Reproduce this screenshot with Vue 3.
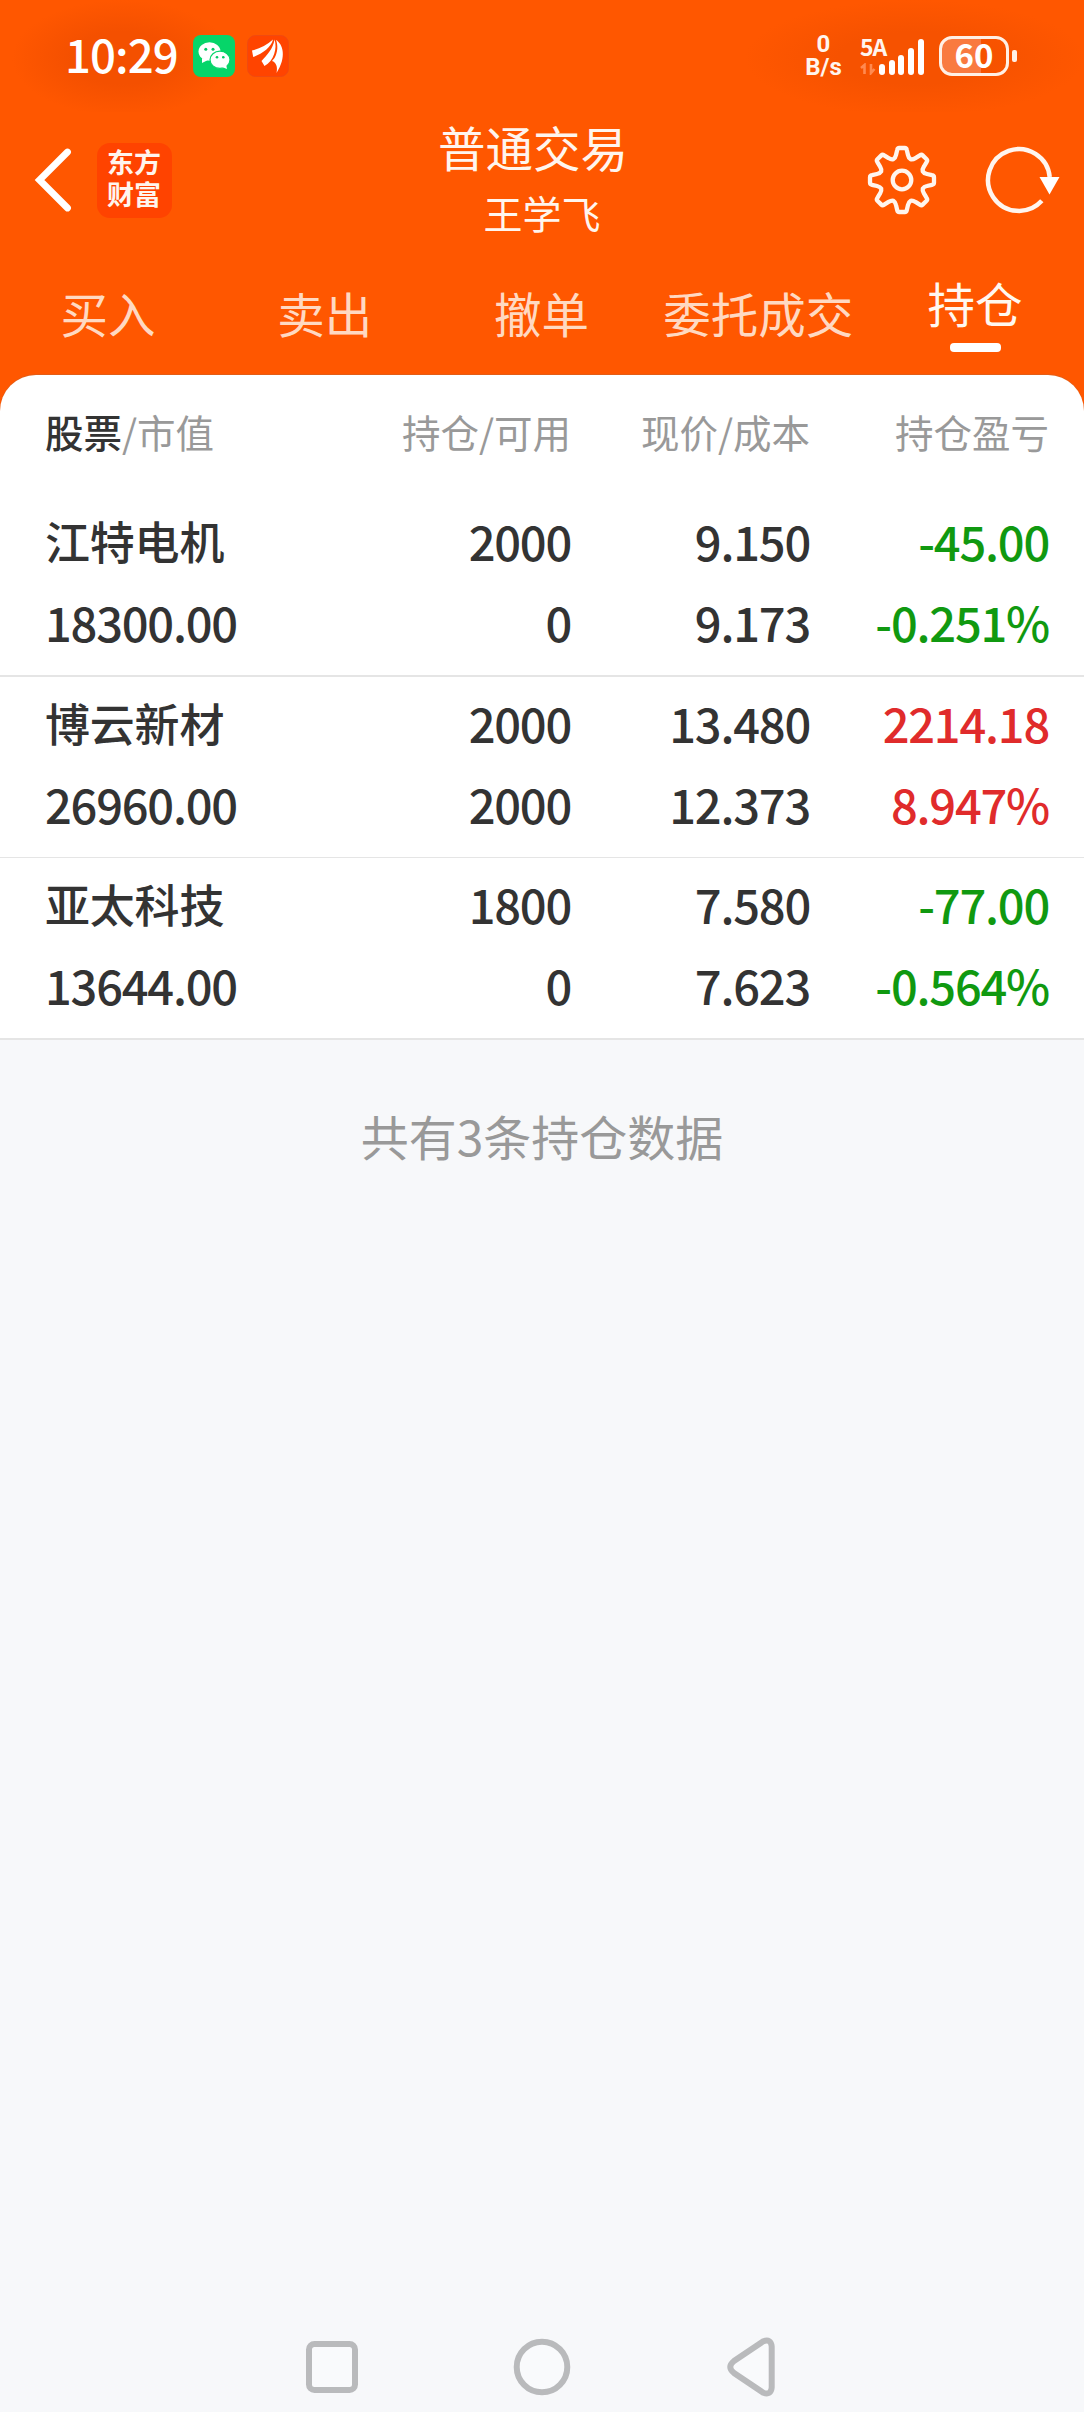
<script setup>
const tabs = ['买入', '卖出', '撤单', '委托成交', '持仓']
const active = '持仓'

const holdings = [
  { name: '江特电机', value: '18300.00', amount: '2000', usable: '0', price: '9.150', cost: '9.173', profit: '-45.00', rate: '-0.251%' },
  { name: '博云新材', value: '26960.00', amount: '2000', usable: '2000', price: '13.480', cost: '12.373', profit: '2214.18', rate: '8.947%' },
  { name: '亚太科技', value: '13644.00', amount: '1800', usable: '0', price: '7.580', cost: '7.623', profit: '-77.00', rate: '-0.564%' },
]

const trend = (v) => (v.startsWith('-') ? 'down' : 'up')

const signal = [11, 15, 20, 27, 36]

// Eight-tooth gear outline centred on the origin
function gear() {
  const at = (x, y, k) => {
    const a = (k * Math.PI) / 4
    return `${(x * Math.cos(a) - y * Math.sin(a)).toFixed(2)} ${(x * Math.sin(a) + y * Math.cos(a)).toFixed(2)}`
  }
  let d = ''
  for (let k = 0; k < 8; k++) {
    d += `${k ? 'L' : 'M'}${at(-6, -25, k)}L${at(-4.8, -30, k)}Q${at(-4.4, -32, k)} ${at(-2.8, -32, k)}`
    d += `L${at(2.8, -32, k)}Q${at(4.4, -32, k)} ${at(4.8, -30, k)}L${at(6, -25, k)}`
    d += `Q${at(6.6, -22, k)} ${at(8.6, -20.8, k)}Q${at(10.6, -20.2, k)} ${at(-6, -25, k + 1)}`
  }
  return d + 'Z'
}
const gearPath = gear()
</script>

<template>
  <div class="screen">
    <header class="top">
      <div class="status">
        <span class="time">10:29</span>
        <svg class="app" width="42" height="42" viewBox="0 0 42 42">
          <rect width="42" height="42" rx="8" fill="#06d569" />
          <ellipse cx="16.500" cy="16.500" rx="11" ry="9.300" fill="#fff" />
          <path d="M9 23l0 5 6-3z" fill="#fff" />
          <ellipse cx="27" cy="24.800" rx="10" ry="8.600" fill="#fff" stroke="#06d569" stroke-width="1.200" />
          <path d="M29 32l5 2-1-5z" fill="#fff" />
          <g fill="#06c862"><circle cx="12.800" cy="14.300" r="1.500" /><circle cx="20" cy="14.300" r="1.500" /><circle cx="24" cy="22.300" r="1.300" /><circle cx="30.300" cy="22.300" r="1.300" /></g>
        </svg>
        <svg class="app2" width="42" height="42" viewBox="0 0 42 42">
          <rect x=".5" y=".5" width="41" height="41" rx="8" fill="#ff4400" stroke="#f04a10" />
          <path d="M5 15.500C12 14 20 10 26 4.500C24.500 12 15 19 6.200 22z" fill="#fff" />
          <path d="M14.500 26C20 20 26 14 27.500 4.500C30.500 13 27 26 17.500 31z" fill="#fff" />
          <path d="M27.500 23C31 17 31 10 29 5C36 9 40 22 29.500 38C31 32 29 27 25 26z" fill="#fff" />
        </svg>
        <div class="spacer"></div>
        <div class="speed"><span>0</span><span>B/s</span></div>
        <div class="cell">
          <div class="net">
            <span>5A</span>
            <svg width="16" height="12" viewBox="0 0 16 12"><path d="M4.500 11V2L1 5M11 1v9l3.500-4" fill="none" stroke="#ff8a50" stroke-width="2.600" /></svg>
          </div>
          <div class="bars"><i v-for="h in signal" :key="h" :style="{ height: h + 'px' }"></i></div>
        </div>
        <div class="battery"><span>60</span></div>
        <i class="cap"></i>
      </div>

      <div class="nav">
        <div class="left">
          <svg width="40" height="66" viewBox="0 0 40 66"><path d="M35.500 5L7.500 33L35.500 61" fill="none" stroke="#fff" stroke-width="6.800" stroke-linecap="round" stroke-linejoin="miter" /></svg>
          <div class="logo"><span>东方</span><span>财富</span></div>
        </div>
        <div class="titles">
          <div class="title">普通交易</div>
          <div class="user">王学飞</div>
        </div>
        <div class="right">
          <svg width="70" height="70" viewBox="-35 -35 70 70" fill="none" stroke="#fff5ee" stroke-width="4.300">
            <path :d="gearPath" stroke-linejoin="round" />
            <circle r="9.300" />
          </svg>
          <svg class="refresh" width="76" height="70" viewBox="-35 -35 76 70">
            <path d="M22.800 20.800A30.900 30.900 0 1 1 30.700 -3" fill="none" stroke="#fff5ee" stroke-width="4.500" />
            <path d="M20.500 -3H40.500L30.500 14.500Z" fill="#fff" />
          </svg>
        </div>
      </div>

      <nav class="tabs">
        <div v-for="t in tabs" :key="t" class="tab" :class="{ on: t === active }">
          <span>{{ t }}</span><i v-if="t === active"></i>
        </div>
      </nav>
    </header>

    <main class="card">
      <div class="grid head">
        <div class="first"><b>股票</b>/市值</div>
        <div>持仓/可用</div>
        <div>现价/成本</div>
        <div>持仓盈亏</div>
      </div>
      <div v-for="h in holdings" :key="h.name" class="grid row">
        <div class="first"><p class="name">{{ h.name }}</p><p>{{ h.value }}</p></div>
        <div><p>{{ h.amount }}</p><p>{{ h.usable }}</p></div>
        <div><p>{{ h.price }}</p><p>{{ h.cost }}</p></div>
        <div :class="trend(h.profit)"><p>{{ h.profit }}</p><p>{{ h.rate }}</p></div>
      </div>
    </main>
    <p class="total">共有3条持仓数据</p>

    <footer class="keys">
      <svg width="60" height="60" viewBox="0 0 60 60"><rect x="7" y="7" width="46" height="46" rx="5.500" /></svg>
      <svg width="60" height="60" viewBox="0 0 60 60"><circle cx="30" cy="30" r="25.300" /></svg>
      <svg width="60" height="60" viewBox="0 0 60 60"><path d="M41.300 4.300L12 24Q4.500 30 12 36L41.300 55.700Q49 58.500 49.700 50.500V9.500Q49 1.500 41.300 4.300Z" /></svg>
    </footer>
  </div>
</template>

<style>
body { background: #f7f8fa; }
</style>

<style scoped>
.screen {
  width: 1084px;
  height: 2412px;
  display: flex;
  flex-direction: column;
  background: #f7f8fa;
  font-family: "Noto Sans CJK SC", sans-serif;
  overflow: hidden;
}
p { margin: 0; }
.top { height: 412px; flex: none; background: #ff5700; color: #fff5ee; }
.status {
  height: 112px;
  box-sizing: border-box;
  padding: 0 67px 0 65px;
  display: flex;
  align-items: center;
  background:
    radial-gradient(ellipse 110px 58px at 122px 58px, #f45000 45%, transparent),
    radial-gradient(ellipse 170px 58px at 915px 58px, #f65200 45%, transparent);
}
.time { width: 128px; font-size: 45.500px; font-weight: 500; line-height: 56px; letter-spacing: -0.9px; margin-top: -6px; color: #fff; }
.app2 { margin-left: 12px; }
.spacer { flex: 1; }
.speed {
  width: 40px;
  margin-right: 15px;
  display: flex;
  flex-direction: column;
  align-items: center;
  font-family: Roboto, "Noto Sans CJK SC", sans-serif;
  font-size: 24px;
  font-weight: 700;
  line-height: 23px;
}
.speed span { margin-left: -3px; }
.cell { display: flex; align-items: flex-end; height: 38px; width: 79px; margin-top: -1px; }
.net { width: 19px; height: 38px; display: flex; flex-direction: column; justify-content: space-between; font-size: 23px; font-weight: 700; line-height: 20px; }
.net span { margin-top: -1px; letter-spacing: -1px; }
.bars { display: flex; align-items: flex-end; gap: 3.700px; }
.bars i { width: 6px; border-radius: 3px; background: #fff; }
.battery {
  box-sizing: border-box;
  width: 70px;
  height: 40px;
  border: 3px solid #fff0e6;
  border-radius: 13px;
  background: linear-gradient(90deg, #f97a40 39px, transparent 39px);
  display: flex;
  align-items: center;
  justify-content: center;
  color: #fff;
  font-size: 33px;
  font-weight: 700;
  line-height: 34px;
}
.battery span { margin-top: -5px; }
.cap { width: 5px; height: 12px; margin-left: 3px; border-radius: 2px; background: #fff0e6; }

.nav { height: 136px; display: flex; align-items: center; justify-content: space-between; }
.left { width: 350px; padding-left: 32px; display: flex; align-items: center; }
.logo {
  width: 75px;
  height: 75px;
  margin-left: 25px;
  border-radius: 13px;
  background: #ff4300;
  display: flex;
  flex-direction: column;
  align-items: center;
  justify-content: center;
  font-size: 27px;
  font-weight: 700;
  line-height: 32px;
}
.logo span { margin: -2px 1px 2px 0; }
.titles { display: flex; flex-direction: column; align-items: center; margin-top: -5px; }
.title { font-size: 47.500px; line-height: 68px; margin-right: 18px; }
.user { font-size: 39px; line-height: 62px; }
.right { width: 382px; display: flex; justify-content: flex-end; padding-right: 24px; box-sizing: border-box; }
.refresh { margin-left: 47px; }

.tabs { display: flex; height: 127px; }
.tab { flex: 1 0 0; display: flex; flex-direction: column; align-items: center; padding-top: 29px; font-size: 47.500px; line-height: 72px; color: #ffd9c2; white-space: nowrap; }
.tab span { margin-left: -1px; }
.tab.on { padding-top: 19px; color: #fff8f0; }
.tab i { width: 51px; height: 9px; margin-top: 4px; border-radius: 4px; background: #fff; }

.card { margin-top: -37px; background: #fff; border-radius: 36px 36px 0 0; box-shadow: 0 -1px 0 #b9683a66; }
.grid { display: grid; grid-template-columns: 240px 286px 239px 239px; padding: 0 35px 0 45px; text-align: right; }
.first { text-align: left; white-space: nowrap; }
.head { height: 120px; box-sizing: border-box; padding-right: 36px; font-size: 38.500px; line-height: 112px; color: #999; }
.head b { font-weight: 500; color: #333; }
.row { box-sizing: border-box; height: 182px; padding-top: 5px; border-bottom: 2px solid #e5e5e5; font-size: 47px; line-height: 81px; font-weight: 500; letter-spacing: -1.200px; color: #333; }
.row:nth-child(3) { height: 181px; border-bottom-width: 1px; }
.row .name { font-size: 45px; letter-spacing: -0.200px; }
.row .down { color: #109910; }
.row .up { color: #e02b2b; }
.total { margin-top: 60px; text-align: center; font-size: 48px; line-height: 70px; color: #999; }
.keys { margin-top: auto; height: 90px; display: flex; justify-content: center; gap: 150px; }
.keys svg { margin-top: 15px; fill: #f9fafc; stroke: #b9babc; stroke-width: 6; }
</style>
